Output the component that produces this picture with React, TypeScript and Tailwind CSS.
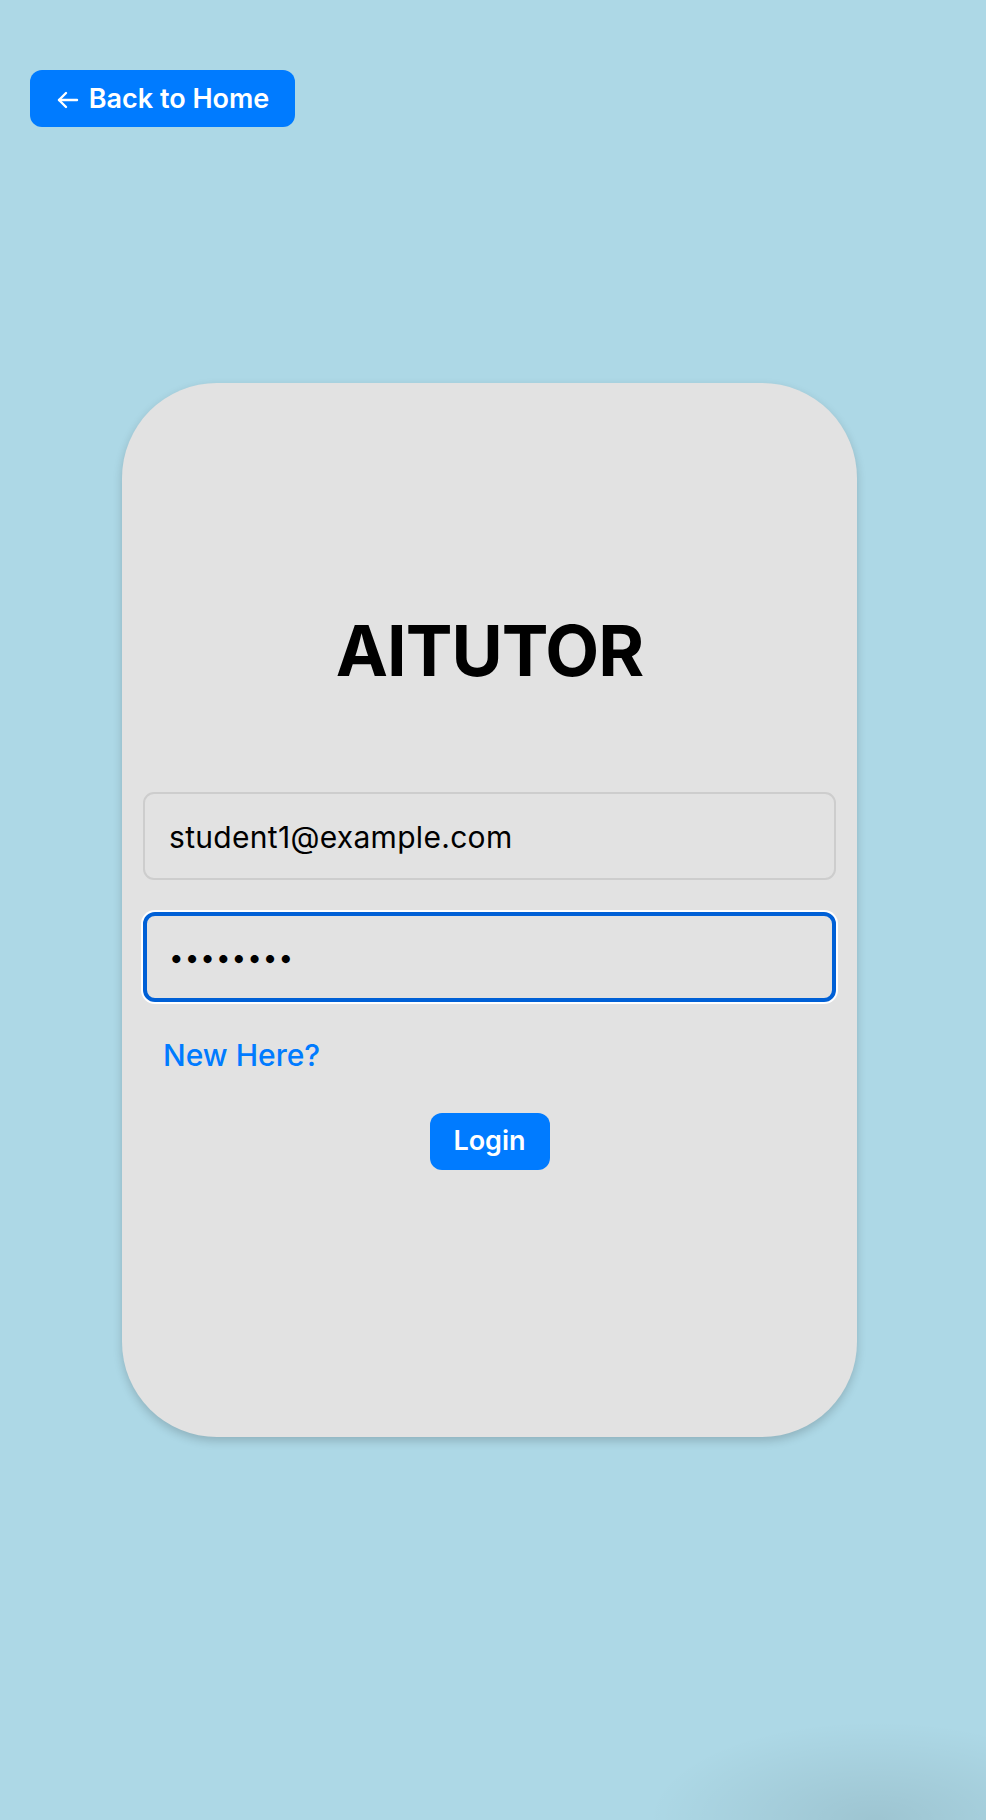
import React, { useState } from 'react'

export default function App() {
  const [email, setEmail] = useState('student1@example.com')
  const [password, setPassword] = useState('password')

  return (
    <div className="relative min-h-screen overflow-hidden bg-[#ADD8E6] font-['Inter','Liberation_Sans',sans-serif] flex items-center justify-center pr-[7px]">
      {/* back button */}
      <button className="absolute left-[30px] top-[70px] h-[57px] w-[265px] rounded-[12px] bg-[#007BFF] text-white text-[27px] font-semibold flex items-center justify-center gap-[9px] pt-[2px]">
        <svg width="24" height="24" viewBox="0 0 24 24" fill="none" stroke="currentColor" strokeWidth="2.4" strokeLinecap="round" strokeLinejoin="round">
          <path d="M21 12H3" />
          <path d="M10 5l-7 7 7 7" />
        </svg>
        <span>Back to Home</span>
      </button>

      {/* login card */}
      <div className="w-[735px] h-[1054px] rounded-[95px] bg-[#E2E2E2] shadow-[0_4px_10px_rgba(0,0,0,0.18)] px-[21px] pt-[233px] flex flex-col">
        <h1 className="text-center text-[70px] leading-none font-bold text-black tracking-[-1px]">AITUTOR</h1>

        <input
          type="email"
          value={email}
          onChange={(e) => setEmail(e.target.value)}
          className="mt-[106px] h-[88px] w-full rounded-[11px] border-2 border-[#CDCDCD] bg-[#E2E2E2] px-[24px] pt-[1px] text-[30px] tracking-[0.3px] text-black outline-none"
        />
        <input
          type="password"
          value={password}
          onChange={(e) => setPassword(e.target.value)}
          className="mt-[32px] h-[90px] w-full rounded-[12px] border-[4px] border-[#0060D6] bg-[#E2E2E2] px-[22px] text-[26px] tracking-[1px] text-black outline-none ring-2 ring-white"
        />

        <a href="#" className="mt-[32px] ml-[20px] text-[30px] leading-[42px] font-medium text-[#007BFF]">
          New Here?
        </a>

        <div className="mt-[37px] flex justify-center">
          <button className="h-[57px] w-[120px] rounded-[12px] bg-[#007BFF] text-white text-[27px] font-semibold">
            Login
          </button>
        </div>
      </div>

      {/* faint shadow of something below the fold */}
      <div className="absolute right-[-120px] bottom-0 w-[460px] h-[100px] bg-[radial-gradient(ellipse_at_bottom,rgba(0,0,0,0.09),transparent_70%)]" />
    </div>
  )
}
